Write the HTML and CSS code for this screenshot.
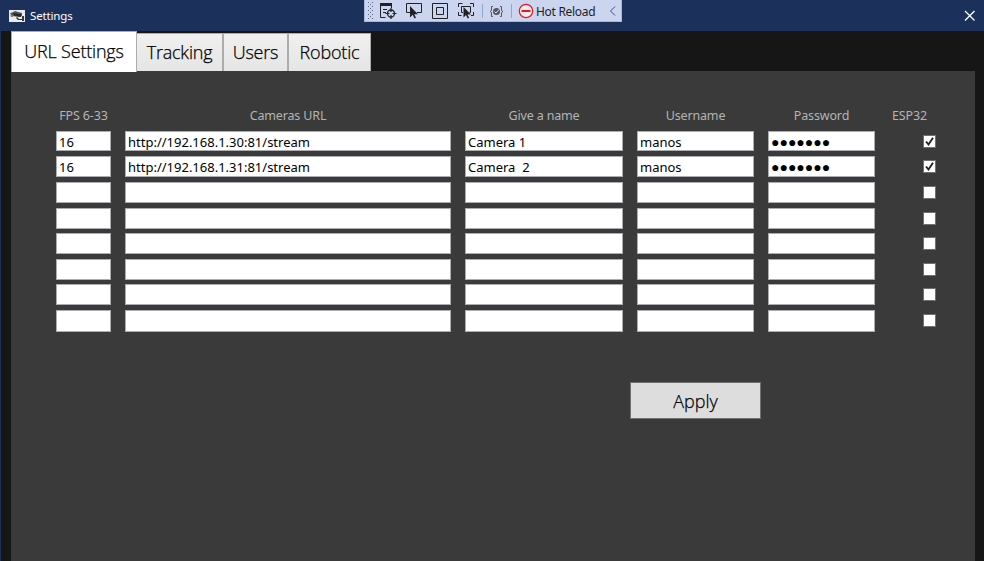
FILE: index.html
```html
<!DOCTYPE html>
<html lang="en">
<head>
<meta charset="utf-8">
<title>Settings</title>
<link rel="stylesheet" href="styles.css">
</head>
<body>
<div class="window">
  <header class="titlebar">
    <svg class="app-icon" width="16" height="12" viewBox="0 0 16 12"><rect width="16" height="12" fill="#e9ebef"/><path d="M1 3.500l5-2.500 7 2v3L10 7 3 6z" fill="#55585c"/><path d="M4 3l8 1v3L5 5.500z" fill="#25282c"/><path d="M1 5l3 .5V7H2z" fill="#888"/><path d="M8 7l2 2h3V6h2v5h-2v-1H9L7 8z" fill="#34373b"/></svg>
    <span class="title">Settings</span>
    <svg class="close" width="12" height="12" viewBox="0 0 12 12"><path d="M1 1l9.500 9.500M10.500 1L1 10.500" stroke="#fff" stroke-width="1.300"/></svg>
  </header>
  <div class="toolbar">
    <svg width="130" height="21" viewBox="364 0 130 21" class="tools" fill="none" stroke="#202124">
      <path d="M368 2h1v1h-1zM372 2h1v1h-1zM370 4h1v1h-1zM368 6h1v1h-1zM372 6h1v1h-1zM370 8h1v1h-1zM368 10h1v1h-1zM372 10h1v1h-1zM370 12h1v1h-1zM368 14h1v1h-1zM372 14h1v1h-1zM370 16h1v1h-1zM368 18h1v1h-1zM372 18h1v1h-1z" fill="#5b6685" stroke="none"/>
      <path d="M380 4.500h12" stroke-width="3"/><path d="M380.500 5v12.500h5M391.500 5v3M383 9.500h4M383 12.500h3"/>
      <circle cx="391" cy="13.500" r="3.500" stroke-width="1.300"/><path d="M391 8v4M391 15v4M385.500 13.500h4M392.500 13.500h4" stroke-width="1.200"/>
      <path d="M410 12.500h-3.500v-9h15v9H417"/><path d="M410 6v11.500l2.700-2.700 1.800 3.700 1.500-.8-1.800-3.400h3.800z" fill="#202124" stroke="none"/>
      <path d="M432.500 3.500h15v15h-15zM436.500 7.500h7v7h-7z"/>
      <path d="M458.500 7V3.500h4M470 3.500h3.500V7M458.500 12v3.500h3M473.500 12v3.500H471M463 12.500h-1.500v-6h9v6h-1"/><path d="M463.500 7v10.500l2.500-2.500 1.700 3.500 1.400-.8-1.700-3.200h3.600z" fill="#202124" stroke="none"/>
      <path d="M482.500 4v14" stroke="#94a6cc"/>
    </svg>
    <svg width="42" height="21" viewBox="488 0 42 21" class="tools tools-right" fill="none">
      <path d="M493 6.500h-1.500v4L490 11.500l1.500 1v4h1.500M500 6.500h1.500v4l1.500 1-1.500 1v4H500" stroke="#55585f"/><circle cx="496.500" cy="11.500" r="3.500" fill="#55585f"/><path d="M494.500 11.500l1.500 1.500 3-3.500" stroke="#dfe5f5"/>
      <path d="M511.500 4v14" stroke="#94a6cc"/>
    </svg>
    <svg class="reload-icon" width="16" height="16" viewBox="0 0 16 16"><circle cx="8" cy="8" r="6.700" fill="#f4ecef" stroke="#e01b24" stroke-width="1.200"/><path d="M3.500 8h9" stroke="#e01b24" stroke-width="2"/></svg>
    <span class="reload">Hot Reload</span>
    <svg class="chevron" width="7" height="10" viewBox="0 0 7 10"><path d="M6 .5L1.500 5 6 9.500" fill="none" stroke="#3e4a78"/></svg>
  </div>
  <main class="body">
    <nav class="tabs">
      <div class="tab active">URL Settings</div>
      <div class="tab tracking">Tracking</div>
      <div class="tab users">Users</div>
      <div class="tab robotic">Robotic</div>
    </nav>
    <section class="panel">
      <div class="grid head">
        <span>FPS 6-33</span><span>Cameras URL</span><span>Give a name</span><span>Username</span><span>Password</span><span class="h-esp">ESP32</span>
      </div>
      <div class="grid rows">
        <div class="field">16</div><div class="field">http://192.168.1.30:81/stream</div><div class="field">Camera 1</div><div class="field">manos</div><div class="field password">●●●●●●●</div><div class="check"><svg viewBox="0 0 11 11"><path d="M2 5.500l2.500 3L9 1.800" fill="none" stroke="#212121" stroke-width="1.900"/></svg></div>
        <div class="field">16</div><div class="field">http://192.168.1.31:81/stream</div><div class="field">Camera&nbsp; 2</div><div class="field">manos</div><div class="field password">●●●●●●●</div><div class="check"><svg viewBox="0 0 11 11"><path d="M2 5.500l2.500 3L9 1.800" fill="none" stroke="#212121" stroke-width="1.900"/></svg></div>
        <div class="field"></div><div class="field"></div><div class="field"></div><div class="field"></div><div class="field"></div><div class="check"></div>
        <div class="field"></div><div class="field"></div><div class="field"></div><div class="field"></div><div class="field"></div><div class="check"></div>
        <div class="field"></div><div class="field"></div><div class="field"></div><div class="field"></div><div class="field"></div><div class="check"></div>
        <div class="field"></div><div class="field"></div><div class="field"></div><div class="field"></div><div class="field"></div><div class="check"></div>
        <div class="field"></div><div class="field"></div><div class="field"></div><div class="field"></div><div class="field"></div><div class="check"></div>
        <div class="field"></div><div class="field"></div><div class="field"></div><div class="field"></div><div class="field"></div><div class="check"></div>
      </div>
      <button class="apply">Apply</button>
    </section>
  </main>
</div>
</body>
</html>
```
FILE: styles.css
```css
* { box-sizing: border-box; }
body { margin: 0; font-family: "Noto Sans", "Open Sans", sans-serif; }
svg { display: block; flex: none; }
.window { position: relative; width: 984px; height: 561px; overflow: hidden; background: #161616; border-left: 1px solid #1b315c; }
.titlebar { height: 31px; background: #1b315c; display: flex; align-items: center; padding: 0 8px; }
.title { margin-left: 5px; color: #fff; font-size: 11.5px; line-height: 16px; letter-spacing: -.15px; padding-top: 1px; }
.close { margin-left: auto; }
.toolbar { position: absolute; left: 363px; top: 0; width: 258px; height: 22px; background: #ccd5f0; border: 1px solid #a9b7dc; border-top: 0; display: flex; align-items: center; color: #1e1e1e; }
.tools { margin-left: -1px; }
.tools-right { margin-left: -6px; }
.reload-icon { margin: 1px 0 0 -12px; }
.reload { font-size: 12px; line-height: 16px; margin-left: 2px; white-space: nowrap; letter-spacing: -.3px; padding-top: 2px; }
.chevron { margin: 1px 5px 0 auto; }
.body { padding: 0 9px 0 10px; }
.tabs { display: flex; align-items: flex-end; height: 40px; }
.tab { height: 38px; border: 1px solid #acacac; border-bottom: 0; background: linear-gradient(#f0f0f0, #e5e5e5); font-family: "Open Sans", "Noto Sans", sans-serif; font-weight: 350; font-size: 18px; letter-spacing: -.2px; line-height: 36px; text-align: center; white-space: nowrap; color: #000; -webkit-text-stroke: .25px #000; }
.tab.active { width: 126px; height: 41px; margin-bottom: -1px; background: #fff; line-height: 38px; z-index: 1; }
.tracking { width: 86px; border-left: 0; }
.users { width: 65px; }
.robotic { width: 83px; }
.panel { height: 490px; background: #3a3a3a; padding: 36px 0 0 45px; }
.grid { display: grid; grid-template-columns: 55px 326px 158px 117px 107px 47px; column-gap: 14px; }
.head { height: 24px; color: #b4b4b4; font-size: 12.5px; letter-spacing: -.15px; line-height: 18px; text-align: center; white-space: nowrap; }
.head .h-esp { text-align: left; padding-left: 3px; }
.rows { grid-template-rows: 25px 26px 26px 25px 26px 25px 26px 22px; }
.field { height: 21px; background: #fff; border: 1px solid #abadb3; padding-left: 2px; font-size: 13px; line-height: 20px; color: #000; white-space: nowrap; overflow: hidden; }
.rows > .field:nth-child(-n+5) { height: 20px; }
.rows > .field:nth-child(n+43) { height: 22px; }
.password { font-size: 14px; padding-left: 2px; line-height: 19px; }
.check { width: 13px; height: 13px; margin: 4px 0 0 34px; background: #fff; border: 1px solid #707070; }
.apply { display: block; width: 131px; height: 37px; margin: 50px 0 0 574px; padding: 0; border: 1px solid #707070; border-radius: 0; background: #ddd; color: #000; font: 350 18px "Open Sans", "Noto Sans", sans-serif; -webkit-text-stroke: .25px #000; }
```
